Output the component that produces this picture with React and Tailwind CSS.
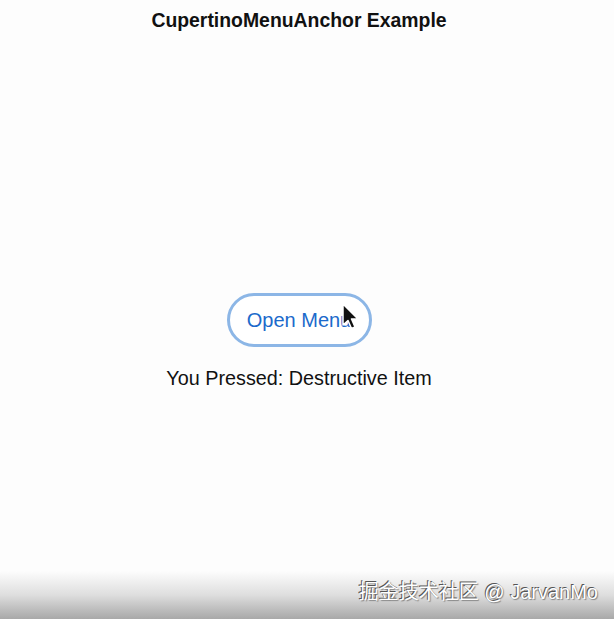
import {} from "react";

// Small mouse pointer sitting over the button
function Pointer() {
  return (
    <svg
      width="20"
      height="28"
      viewBox="0 0 20 28"
      className="absolute left-[114px] top-[10px]"
    >
      <path
        d="M2 1 L2 22 L7 17.5 L10.5 25.5 L14 24 L10.5 16 L17 16 Z"
        fill="#111"
        stroke="#fff"
        strokeWidth="1.5"
        strokeLinejoin="round"
      />
    </svg>
  );
}

export default function App() {
  return (
    <div
      className="relative flex h-[619px] w-[614px] flex-col overflow-hidden bg-[#fdfdfd]"
      style={{ fontFamily: '"Liberation Sans", Arial, sans-serif' }}
    >
      <div className="flex w-[598px] justify-center pt-[9px]">
        <h1 className="text-[19.4px] font-bold leading-[22px] text-[#111]">
          CupertinoMenuAnchor Example
        </h1>
      </div>

      {/* Body */}
      <div className="flex w-[598px] flex-col items-center pt-[262px]">
        <div className="relative">
          <button className="flex h-[54px] w-[145px] items-center justify-center rounded-full border-[3px] border-[#8cb6e6] bg-white text-[20px] text-[#1c6acb]">
            Open Menu
          </button>
          <Pointer />
        </div>
        <p className="mt-[20px] text-[19.8px] leading-[22px] text-[#111]">
          You Pressed: Destructive Item
        </p>
      </div>

      {/* Footer strip with watermark */}
      <div className="absolute bottom-0 left-0 flex h-[48px] w-full items-center justify-end bg-gradient-to-b from-[#fdfdfd] via-[#dedede] to-[#a8a8a8] pr-[16px]">
        <span
          className="mt-[-6px] text-[20px] text-white"
          style={{
            fontFamily: '"Liberation Sans", "Noto Sans CJK SC", sans-serif',
            textShadow: "-1px -1px 0 #555, 1px 1px 1px #888",
          }}
        >
          掘金技术社区 @ JarvanMo
        </span>
      </div>
    </div>
  );
}
